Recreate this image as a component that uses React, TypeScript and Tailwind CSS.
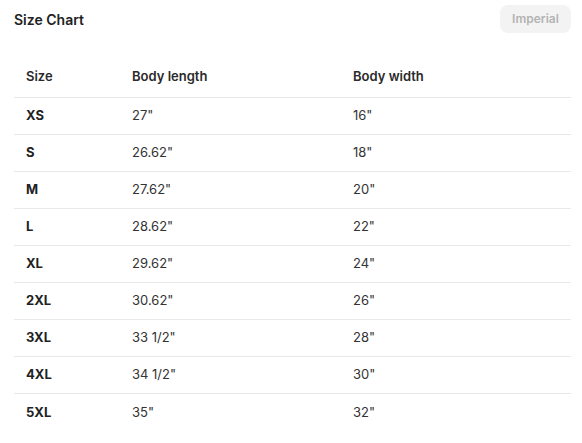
const rows = [
  { size: "XS", length: '27"', width: '16"' },
  { size: "S", length: '26.62"', width: '18"' },
  { size: "M", length: '27.62"', width: '20"' },
  { size: "L", length: '28.62"', width: '22"' },
  { size: "XL", length: '29.62"', width: '24"' },
  { size: "2XL", length: '30.62"', width: '26"' },
  { size: "3XL", length: '33 1/2"', width: '28"' },
  { size: "4XL", length: '34 1/2"', width: '30"' },
  { size: "5XL", length: '35"', width: '32"' },
];

export default function App() {
  return (
    <div className="w-[582px] h-[443px] bg-white pl-[14px] pr-[11px] pt-[5px] font-['Inter',sans-serif] text-[#222]">
      <div className="flex items-center justify-between h-[28px]">
        <h2 className="text-[14px] font-semibold">Size Chart</h2>
        <button className="h-[28px] w-[71px] rounded-lg bg-[#f3f3f3] text-[12px] font-semibold text-[#b3b3b3]">
          Imperial
        </button>
      </div>

      <div className="mt-[28px] text-[13px]">
        {/* header sits a bit higher than the body rows */}
        <div className="grid grid-cols-[106px_221px_1fr] h-[37px] items-start pt-[7px] leading-4 border-b border-[#e8e8e8] font-semibold text-[#2a2a2a]">
          <span className="pl-3">Size</span>
          <span className="pl-3">Body length</span>
          <span className="pl-3">Body width</span>
        </div>
        {rows.map((row, i) => (
          <div
            key={row.size}
            className={
              "grid grid-cols-[106px_221px_1fr] h-[37px] items-center " +
              (i < rows.length - 1 ? "border-b border-[#e8e8e8]" : "")
            }
          >
            <span className="pl-3 font-bold">{row.size}</span>
            <span className="pl-3 text-[#333]">{row.length}</span>
            <span className="pl-3 text-[#333]">{row.width}</span>
          </div>
        ))}
      </div>
    </div>
  );
}
